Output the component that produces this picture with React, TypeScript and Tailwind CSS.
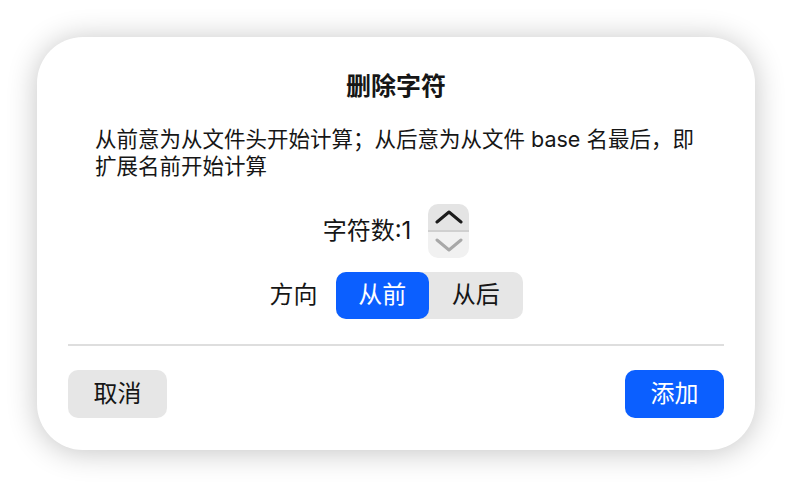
import React, { useState } from 'react';

const font = { fontFamily: 'Inter, "Noto Sans CJK SC", sans-serif' };

const Stepper = ({ onUp, onDown }: { onUp: () => void; onDown: () => void }) => (
  <div className="flex h-[54px] w-[41px] flex-col overflow-hidden rounded-[10px]">
    <button onClick={onUp} className="flex flex-1 items-center justify-center bg-[#e4e4e4]">
      <svg width="28" height="14" viewBox="0 0 28 14" fill="none">
        <path d="M2 12 L14 2 L26 12" stroke="#1c1c1c" strokeWidth="3" strokeLinecap="round" strokeLinejoin="round" />
      </svg>
    </button>
    <div className="h-[2px] bg-[#d0d0d0]" />
    <button onClick={onDown} className="flex flex-1 items-center justify-center bg-[#f1f1f1]">
      <svg width="28" height="14" viewBox="0 0 28 14" fill="none">
        <path d="M2 2 L14 12 L26 2" stroke="#a8a8a8" strokeWidth="3" strokeLinecap="round" strokeLinejoin="round" />
      </svg>
    </button>
  </div>
);

const App = () => {
  const [count, setCount] = useState(1);
  const [dir, setDir] = useState<'front' | 'back'>('front');

  return (
    <div className="flex h-[486px] w-[792px] items-center justify-center bg-white" style={font}>
      <div className="flex h-[413px] w-[718px] flex-col rounded-[46px] bg-white px-[31px] pb-[31px] pt-[34px] text-[#161616] shadow-[0_2px_30px_rgba(0,0,0,0.24)]">
        {/* Title */}
        <h1 className="text-center text-[25px] font-bold leading-[30px]">删除字符</h1>

        {/* Description */}
        <p className="mt-[25px] px-[27px] text-[21.5px] leading-[27px]">
          从前意为从文件头开始计算；从后意为从文件 base 名最后，即扩展名前开始计算
        </p>

        {/* Count */}
        <div className="mt-[24px] flex items-center justify-center gap-[17px]">
          <span className="text-[24px]">字符数:{count}</span>
          <Stepper onUp={() => setCount(c => c + 1)} onDown={() => setCount(c => Math.max(1, c - 1))} />
        </div>

        {/* Direction */}
        <div className="mt-[14px] flex items-center justify-center gap-[18px]">
          <span className="text-[24px]">方向</span>
          <div className="flex h-[47px] w-[187px] rounded-[10px] bg-[#e6e6e6] text-[24px]">
            <button
              onClick={() => setDir('front')}
              className={`flex-1 rounded-[10px] ${dir === 'front' ? 'bg-[#0b5fff] text-white' : ''}`}
            >
              从前
            </button>
            <button
              onClick={() => setDir('back')}
              className={`flex-1 rounded-[10px] ${dir === 'back' ? 'bg-[#0b5fff] text-white' : ''}`}
            >
              从后
            </button>
          </div>
        </div>

        {/* Divider */}
        <div className="mt-[25px] h-[2px] bg-[#dedede]" />

        {/* Footer */}
        <div className="mt-[24px] flex items-center justify-between">
          <button className="h-[48px] w-[99px] rounded-[10px] bg-[#e6e6e6] text-[24px]">取消</button>
          <button className="h-[48px] w-[99px] rounded-[10px] bg-[#0b5fff] text-[24px] text-white">添加</button>
        </div>
      </div>
    </div>
  );
};

export default App;
